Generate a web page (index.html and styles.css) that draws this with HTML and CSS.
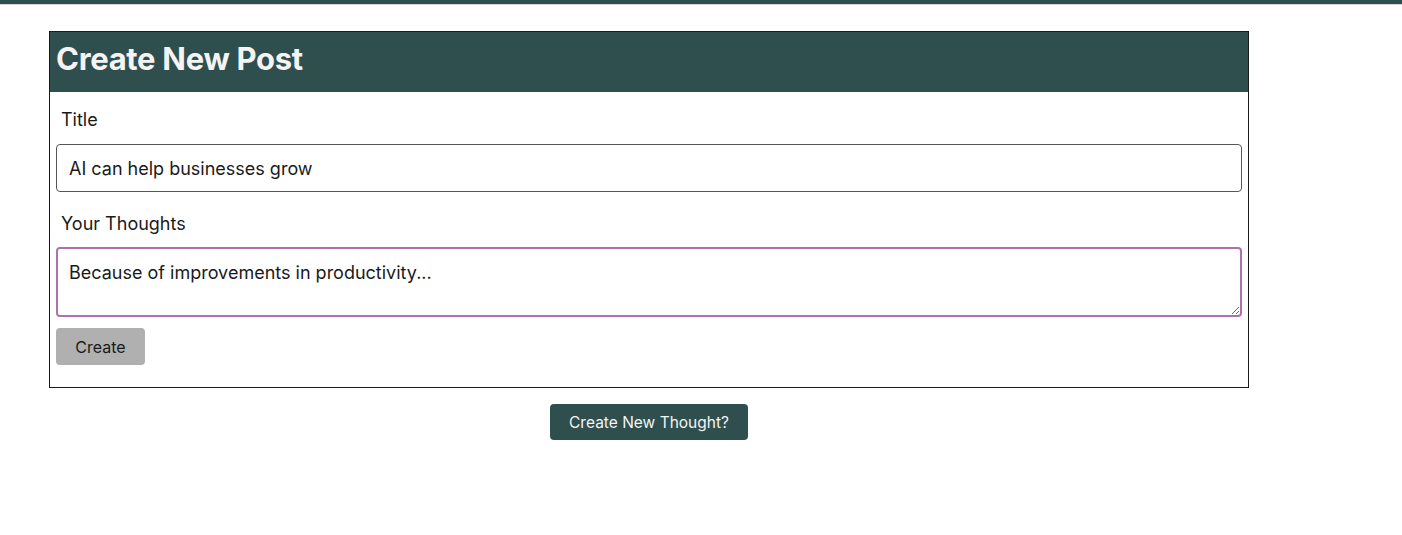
FILE: index.html
```html
<!DOCTYPE html>
<html>
<head>
<meta charset="utf-8">
<link rel="stylesheet" href="styles.css">
</head>
<body>
<div class="topbar"></div>
<main class="page">
  <section class="card">
    <header class="card-head"><h1>Create New Post</h1></header>
    <form class="form">
      <label class="label" for="title">Title</label>
      <input class="field" id="title" type="text" value="AI can help businesses grow">
      <label class="label label-2" for="thoughts">Your Thoughts</label>
      <textarea class="area" id="thoughts">Because of improvements in productivity...</textarea>
      <div class="actions"><button type="button" class="btn-create">Create</button></div>
    </form>
  </section>
  <div class="below">
    <button type="button" class="btn-new">Create New Thought?</button>
  </div>
</main>
</body>
</html>
```

FILE: styles.css
```css
* { box-sizing: border-box; }
html, body { margin: 0; padding: 0; background: #fff; }
body { font-family: Inter, "Noto Sans", sans-serif; color: #1a1a1a; }
.topbar { height: 5px; background: #2f4f4f; border-bottom: 1px solid #d6d6d6; }
.page { width: 1200px; margin: 26px 0 0 49px; }
.card { border: 1px solid #1a1a1a; }
.card-head { background: #2f4f4f; height: 60px; display: flex; align-items: center; padding: 0 6px 7px 6px; }
.card-head h1 { margin: 0; color: #f4f4f4; font-size: 31px; font-weight: 700; letter-spacing: -0.3px; }
.form { display: flex; flex-direction: column; padding: 17px 6px 22px 6px; }
.label { font-size: 18px; line-height: 22px; margin-left: 5px; color: #1a1a1a; }
.label-2 { margin-top: 21px; }
.field { margin-top: 13px; height: 48px; border: 1px solid #555; border-radius: 4px; padding: 0 12px; font-family: inherit; font-size: 18px; color: #1a1a1a; }
.area { margin-top: 12px; height: 70px; border: 2px solid #b070b0; border-radius: 4px; padding: 13px 11px 8px; font-family: inherit; font-size: 18px; line-height: 22px; color: #1a1a1a; resize: vertical; outline: none; }
.actions { margin-top: 11px; }
.btn-create { width: 89px; height: 37px; background: #b0b0b0; border: none; border-radius: 4px; font-family: inherit; font-size: 16px; color: #1a1a1a; }
.below { display: flex; justify-content: center; margin-top: 16px; }
.btn-new { width: 198px; height: 36px; background: #2f4f4f; border: none; border-radius: 4px; font-family: inherit; font-size: 15.5px; color: #f4f4f4; }
```
